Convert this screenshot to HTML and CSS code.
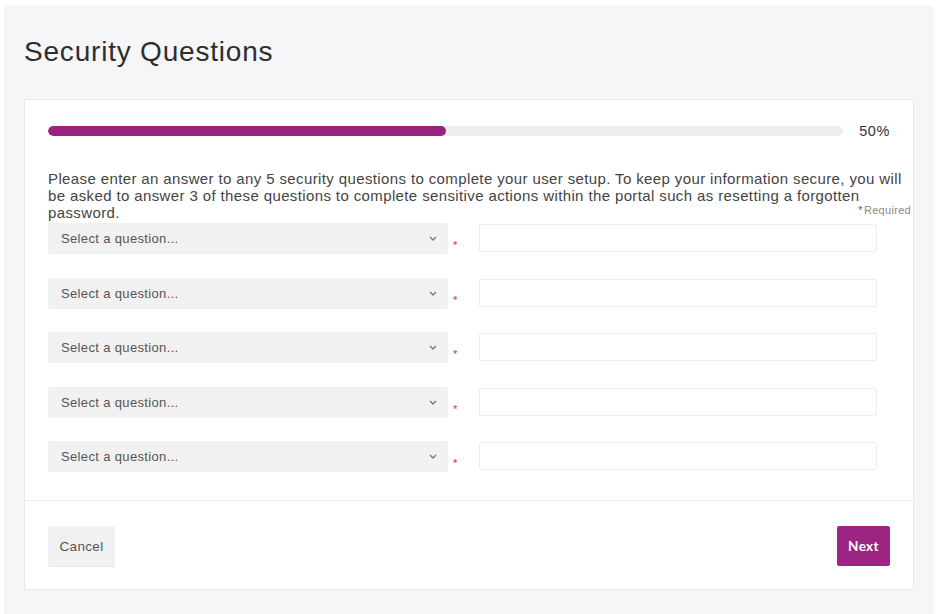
FILE: index.html
```html
<!DOCTYPE html>
<html lang="en">
<head>
<meta charset="utf-8">
<title>Security Questions</title>
<link rel="stylesheet" href="styles.css">
</head>
<body>
<div class="panel">
  <h1 class="title">Security Questions</h1>
  <div class="card">
    <div class="card-body">
      <div class="progress-row">
        <div class="track"><div class="fill" style="width:50%"></div></div>
        <span class="pct">50%</span>
      </div>
      <p class="intro">Please enter an answer to any 5 security questions to complete your user setup. To keep your information secure, you will be asked to answer 3 of these questions to complete sensitive actions within the portal such as resetting a forgotten password.<span class="req-note">Required</span></p>
      <div class="rows">
        <div class="row">
          <div class="select"><span>Select a question...</span><svg class="chev" width="8" height="5" viewBox="0 0 8 5"><path d="M1 1 L4 4 L7 1" fill="none" stroke="#777" stroke-width="1.3"/></svg></div>
          <span class="ast">*</span>
          <div class="input"></div>
        </div>
        <div class="row">
          <div class="select"><span>Select a question...</span><svg class="chev" width="8" height="5" viewBox="0 0 8 5"><path d="M1 1 L4 4 L7 1" fill="none" stroke="#777" stroke-width="1.3"/></svg></div>
          <span class="ast">*</span>
          <div class="input"></div>
        </div>
        <div class="row">
          <div class="select"><span>Select a question...</span><svg class="chev" width="8" height="5" viewBox="0 0 8 5"><path d="M1 1 L4 4 L7 1" fill="none" stroke="#777" stroke-width="1.3"/></svg></div>
          <span class="ast">*</span>
          <div class="input"></div>
        </div>
        <div class="row">
          <div class="select"><span>Select a question...</span><svg class="chev" width="8" height="5" viewBox="0 0 8 5"><path d="M1 1 L4 4 L7 1" fill="none" stroke="#777" stroke-width="1.3"/></svg></div>
          <span class="ast">*</span>
          <div class="input"></div>
        </div>
        <div class="row">
          <div class="select"><span>Select a question...</span><svg class="chev" width="8" height="5" viewBox="0 0 8 5"><path d="M1 1 L4 4 L7 1" fill="none" stroke="#777" stroke-width="1.3"/></svg></div>
          <span class="ast">*</span>
          <div class="input"></div>
        </div>
      </div>
    </div>
    <div class="card-footer">
      <button class="btn btn-cancel">Cancel</button>
      <button class="btn btn-next">Next</button>
    </div>
  </div>
</div>
</body>
</html>
```

FILE: styles.css
```css
html, body {
  margin: 0;
  padding: 0;
  background: #ffffff;
  overflow: hidden;
}
body {
  font-family: "Liberation Sans", Arial, sans-serif;
  color: #444;
  letter-spacing: 0.35px;
}
.panel {
  margin: 6px 0 0 4px;
  width: 930px;
  height: calc(100vh - 6px);
  box-sizing: border-box;
  background: #f6f6f9;
  border-radius: 4px 4px 0 0;
  padding: 30px 20px 0 20px;
}
.title {
  margin: 0 0 31px 0;
  font-size: 28px;
  line-height: 32px;
  font-weight: normal;
  letter-spacing: 0.8px;
  color: #2e2e2e;
}
.card {
  background: #ffffff;
  border: 1px solid #e8e8ec;
  width: 890px;
  box-sizing: border-box;
}
.card-body {
  padding: 25px 2px 28px 23px;
  border-bottom: 1px solid #ececee;
}
.progress-row {
  display: flex;
  align-items: center;
  gap: 16px;
  margin-right: 21px;
  height: 11px;
}
.track {
  flex: 1;
  height: 10px;
  background: #eeeeee;
  border-radius: 5px;
  overflow: hidden;
}
.fill {
  height: 100%;
  background: #9b2380;
  border-radius: 5px;
}
.pct {
  font-size: 14.5px;
  letter-spacing: 0.6px;
  color: #333;
  line-height: 16px;
}
.intro {
  margin: 34px 0 2px 0;
  font-size: 15px;
  line-height: 17px;
  letter-spacing: 0.38px;
  color: #444;
}
.req-note {
  float: right;
  font-size: 11px;
  letter-spacing: 0.3px;
  line-height: 13px;
  color: #8a8a8a;
  margin-top: 0;
}
.req-note::before {
  content: "*";
  color: #d0304f;
  margin-right: 1px;
}
.rows {
  display: flex;
  flex-direction: column;
  gap: 23.5px;
}
.row {
  display: flex;
  align-items: flex-start;
  height: 31px;
}
.select {
  width: 400px;
  height: 31px;
  box-sizing: border-box;
  background: #f1f1f1;
  border-radius: 2px;
  display: flex;
  align-items: center;
  justify-content: space-between;
  padding: 0 11px 0 13px;
  font-size: 13px;
  color: #555;
}
.chev {
  display: block;
}
.ast {
  width: 31px;
  box-sizing: border-box;
  padding-left: 5px;
  padding-top: 17px;
  font-size: 11px;
  line-height: 11px;
  color: #d0304f;
}
.input {
  width: 398px;
  height: 28px;
  box-sizing: border-box;
  margin-top: 1px;
  background: #fff;
  border: 1px solid #eeeef0;
  border-radius: 2px;
}
.card-footer {
  display: flex;
  justify-content: space-between;
  align-items: center;
  padding: 25px 23px 23px 23px;
}
.btn {
  height: 40px;
  border: none;
  border-radius: 2px;
  font-family: "Liberation Sans", Arial, sans-serif;
  font-size: 13.5px;
  letter-spacing: 0.35px;
  cursor: pointer;
}
.btn-cancel {
  width: 67px;
  background: #f1f1f1;
  color: #555;
  box-shadow: 0 1px 0 #e6e6e6;
}
.btn-next {
  width: 53px;
  background: #9c2483;
  color: #fff;
  font-weight: bold;
  font-family: Lato, "Liberation Sans", sans-serif;
}
```
